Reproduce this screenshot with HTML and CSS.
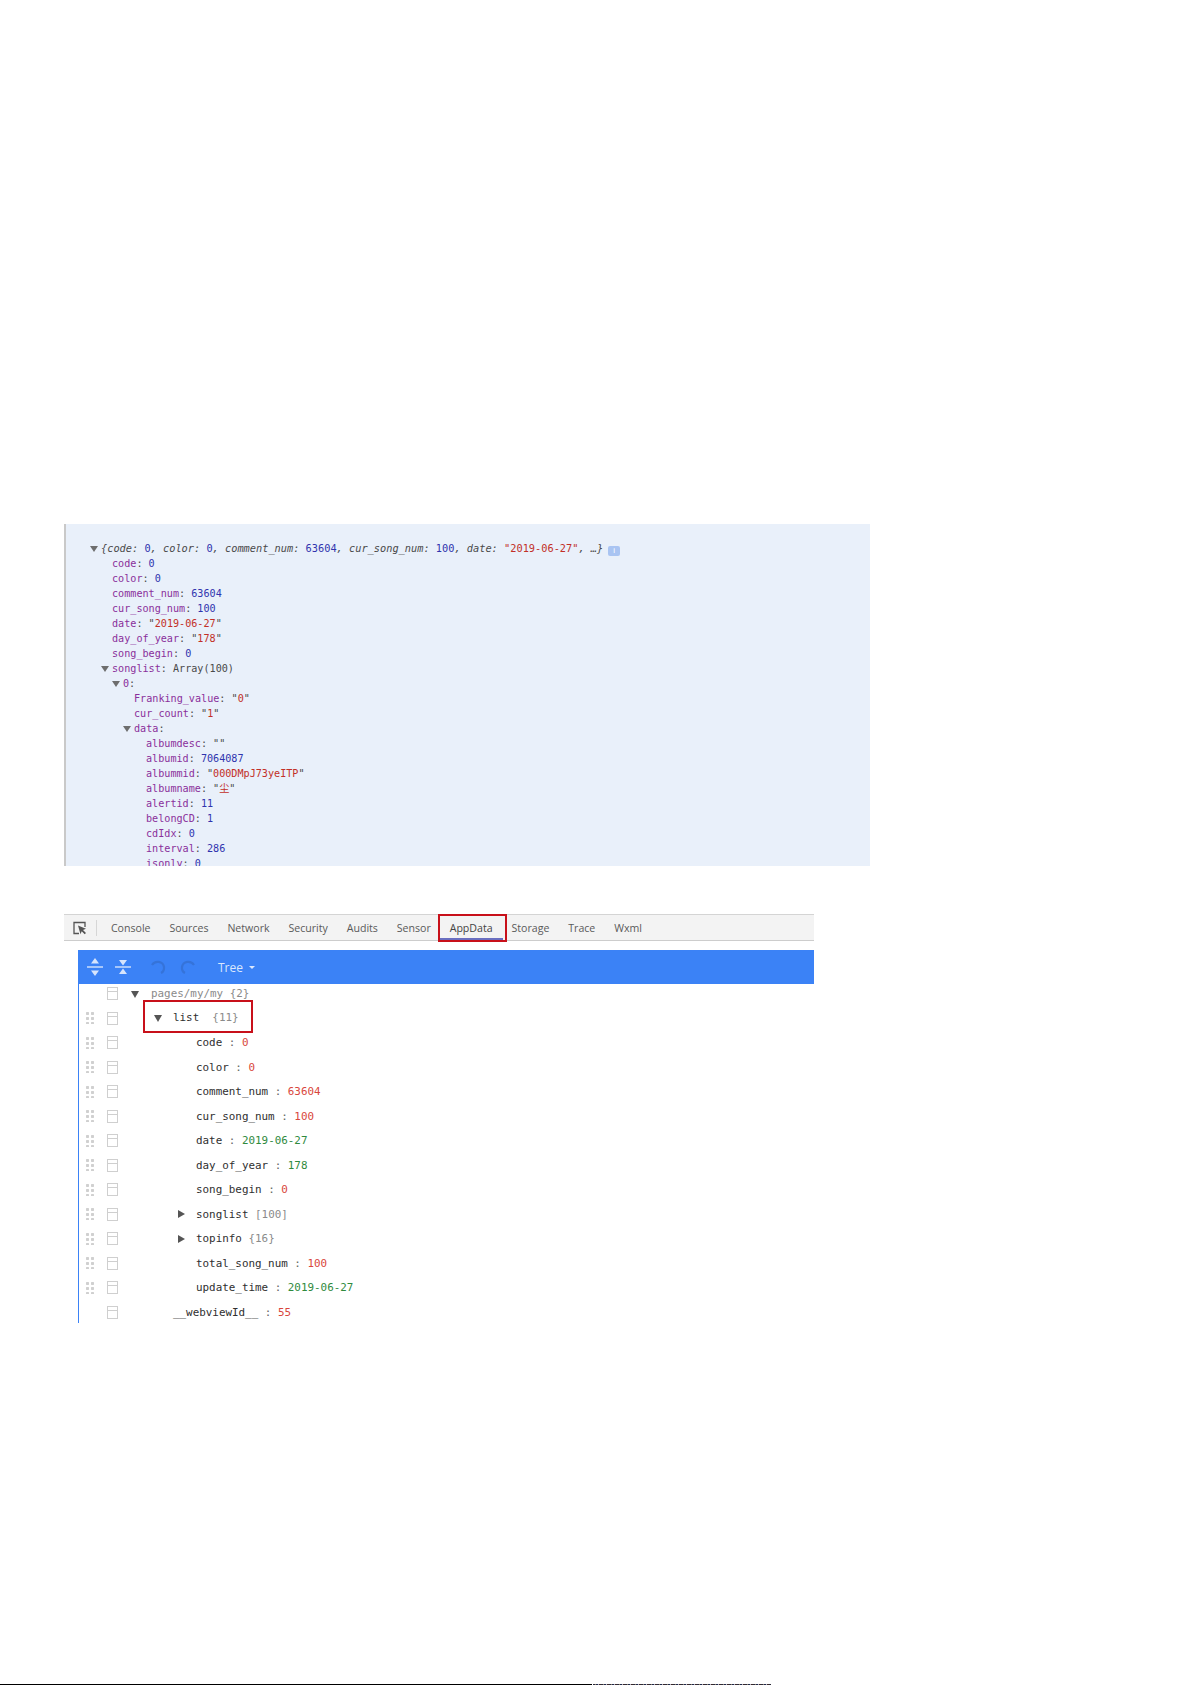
FILE: index.html
```html
<!DOCTYPE html>
<html lang="en">
<head>
<meta charset="utf-8">
<title>AppData</title>
<link rel="stylesheet" href="styles.css">
</head>
<body>
<main class="page">
  <section class="console">
    <div class="line l0 summary"><i class="tri"></i><em>{code: <b class="n">0</b>, color: <b class="n">0</b>, comment_num: <b class="n">63604</b>, cur_song_num: <b class="n">100</b>, date: <b class="s">"2019-06-27"</b>, …}</em><span class="info">i</span></div>
    <div class="line l1"><span class="k">code</span>: <b class="n">0</b></div>
    <div class="line l1"><span class="k">color</span>: <b class="n">0</b></div>
    <div class="line l1"><span class="k">comment_num</span>: <b class="n">63604</b></div>
    <div class="line l1"><span class="k">cur_song_num</span>: <b class="n">100</b></div>
    <div class="line l1"><span class="k">date</span>: "<b class="s">2019-06-27</b>"</div>
    <div class="line l1"><span class="k">day_of_year</span>: "<b class="s">178</b>"</div>
    <div class="line l1"><span class="k">song_begin</span>: <b class="n">0</b></div>
    <div class="line l1"><i class="tri"></i><span class="k">songlist</span>: Array(100)</div>
    <div class="line l2"><i class="tri"></i><span class="k">0</span>:</div>
    <div class="line l3"><span class="k">Franking_value</span>: "<b class="s">0</b>"</div>
    <div class="line l3"><span class="k">cur_count</span>: "<b class="s">1</b>"</div>
    <div class="line l3"><i class="tri"></i><span class="k">data</span>:</div>
    <div class="line l4"><span class="k">albumdesc</span>: ""</div>
    <div class="line l4"><span class="k">albumid</span>: <b class="n">7064087</b></div>
    <div class="line l4"><span class="k">albummid</span>: "<b class="s">000DMpJ73yeITP</b>"</div>
    <div class="line l4"><span class="k">albumname</span>: "<b class="s cjk">尘</b>"</div>
    <div class="line l4"><span class="k">alertid</span>: <b class="n">11</b></div>
    <div class="line l4"><span class="k">belongCD</span>: <b class="n">1</b></div>
    <div class="line l4"><span class="k">cdIdx</span>: <b class="n">0</b></div>
    <div class="line l4"><span class="k">interval</span>: <b class="n">286</b></div>
    <div class="line l4"><span class="k">isonly</span>: <b class="n">0</b></div>
  </section>

  <section class="devtools">
    <nav class="tabs">
      <svg class="inspect" width="14" height="14" viewBox="0 0 14 14"><path d="M6 12.5H1V1.500h11V6" fill="none" stroke="#555" stroke-width="1.300"/><path d="M5 4.500l8 3.300-3 1.200 3 3-1.300 1.300-3-3-1.200 3z" fill="#555"/></svg>
      <span class="sep"></span>
      <span class="tab">Console</span>
      <span class="tab">Sources</span>
      <span class="tab">Network</span>
      <span class="tab">Security</span>
      <span class="tab">Audits</span>
      <span class="tab">Sensor</span>
      <span class="tab active">AppData</span>
      <span class="tab">Storage</span>
      <span class="tab">Trace</span>
      <span class="tab">Wxml</span>
    </nav>
    <div class="editor">
      <header class="bar">
        <svg class="tool" width="16" height="20" viewBox="0 0 16 20"><path d="M8 1l4 5.500H4zM8 19l-4-5.500h8z" fill="#d6e4fc"/><path d="M0 10h16" stroke="#d6e4fc" stroke-width="1.400"/></svg>
        <svg class="tool" width="16" height="20" viewBox="0 0 16 20"><path d="M8 8.500L4 3h8zM8 11.500l4 5.500H4z" fill="#d6e4fc"/><path d="M0 10h16" stroke="#d6e4fc" stroke-width="1.400"/></svg>
        <svg class="tool undo" width="16" height="16" viewBox="0 0 16 16"><path d="M2 6c3-5 11-4 12 2 .3 3-1 5-3 6" fill="none" stroke="#3573d9" stroke-width="2.200"/></svg>
        <svg class="tool redo" width="16" height="16" viewBox="0 0 16 16"><path d="M14 6C11 1 3 2 2 8c-.3 3 1 5 3 6" fill="none" stroke="#3573d9" stroke-width="2.200"/></svg>
        <span class="mode">Tree</span><i class="caret"></i>
      </header>
      <div class="tree">
        <div class="row"><span class="grip none"></span><span class="box"></span><span class="indent d0"><i class="tri big"></i></span><span class="muted">pages/my/my {2}</span></div>
        <div class="row"><span class="grip"></span><span class="box"></span><span class="indent d1"><span class="hl"><i class="tri big"></i><span class="key">list</span>  <span class="muted">{11}</span></span></span></div>
        <div class="row"><span class="grip"></span><span class="box"></span><span class="indent d2"></span><span class="key">code</span><span class="colon"> : </span><span class="red">0</span></div>
        <div class="row"><span class="grip"></span><span class="box"></span><span class="indent d2"></span><span class="key">color</span><span class="colon"> : </span><span class="red">0</span></div>
        <div class="row"><span class="grip"></span><span class="box"></span><span class="indent d2"></span><span class="key">comment_num</span><span class="colon"> : </span><span class="red">63604</span></div>
        <div class="row"><span class="grip"></span><span class="box"></span><span class="indent d2"></span><span class="key">cur_song_num</span><span class="colon"> : </span><span class="red">100</span></div>
        <div class="row"><span class="grip"></span><span class="box"></span><span class="indent d2"></span><span class="key">date</span><span class="colon"> : </span><span class="green">2019-06-27</span></div>
        <div class="row"><span class="grip"></span><span class="box"></span><span class="indent d2"></span><span class="key">day_of_year</span><span class="colon"> : </span><span class="green">178</span></div>
        <div class="row"><span class="grip"></span><span class="box"></span><span class="indent d2"></span><span class="key">song_begin</span><span class="colon"> : </span><span class="red">0</span></div>
        <div class="row"><span class="grip"></span><span class="box"></span><span class="indent d2"><i class="tri big right"></i></span><span class="key">songlist</span>&nbsp;<span class="muted">[100]</span></div>
        <div class="row"><span class="grip"></span><span class="box"></span><span class="indent d2"><i class="tri big right"></i></span><span class="key">topinfo</span>&nbsp;<span class="muted">{16}</span></div>
        <div class="row"><span class="grip"></span><span class="box"></span><span class="indent d2"></span><span class="key">total_song_num</span><span class="colon"> : </span><span class="red">100</span></div>
        <div class="row"><span class="grip"></span><span class="box"></span><span class="indent d2"></span><span class="key">update_time</span><span class="colon"> : </span><span class="green">2019-06-27</span></div>
        <div class="row"><span class="grip none"></span><span class="box"></span><span class="indent d3"></span><span class="key">__webviewId__</span><span class="colon"> : </span><span class="red">55</span></div>
      </div>
    </div>
  </section>
  <footer class="edge"><span class="edge-solid"></span><span class="edge-noise"></span></footer>
</main>
</body>
</html>
```
FILE: styles.css
```css
* { box-sizing: border-box; }
html, body { margin: 0; background: #fff; }
.page {
  height: 1685px;
  display: flex;
  flex-direction: column;
  overflow: hidden;
  font-family: "DejaVu Sans Mono", "Noto Sans CJK SC", monospace;
}
i, em, b { font-style: normal; font-weight: normal; }

/* console panel */
.console {
  margin: 524px 0 0 64px;
  width: 806px;
  height: 342px;
  flex: none;
  overflow: hidden;
  padding-top: 17px;
  background: #e9f0fa;
  border-left: 2px solid #c9c9c9;
  color: #4a4a4a;
  font-size: 10.150px;
  line-height: 15px;
}
.line { height: 15px; white-space: pre; position: relative; }
.l0 { padding-left: 35px; }
.l1 { padding-left: 46px; }
.l2 { padding-left: 57px; }
.l3 { padding-left: 68px; }
.l4 { padding-left: 80px; }
.summary em { font-style: italic; font-size: 10.300px; }
.k { color: #8a2f9a; }
.n { color: #3034ae; }
.s { color: #c22f27; }
.cjk { font-family: "Noto Sans CJK SC", sans-serif; line-height: 12px; }
.tri {
  position: absolute;
  width: 0;
  height: 0;
  margin: 5px 0 0 -11px;
  border-left: 4px solid transparent;
  border-right: 4px solid transparent;
  border-top: 6px solid #6e6e6e;
}
.info {
  display: inline-block;
  width: 12px;
  height: 10px;
  margin-left: 5px;
  border-radius: 2px;
  background: #a9c4f2;
  color: #fff;
  font: 8px/10px "Liberation Sans", sans-serif;
  text-align: center;
  vertical-align: -1px;
}

/* devtools */
.devtools { margin: 48px 0 0 64px; width: 750px; flex: none; }
.tabs {
  height: 27px;
  display: flex;
  align-items: center;
  background: #f3f3f3;
  border-top: 1px solid #d4d4d4;
  border-bottom: 1px solid #cdcdcd;
  font: 10.600px/27px "Open Sans", "Liberation Sans", sans-serif;
  color: #5a5a5a;
}
.inspect { margin-left: 9px; flex: none; }
.sep { width: 1px; height: 16px; margin: 0 4.500px 0 9px; background: #d6d6d6; flex: none; }
.tab { padding: 0 9.450px; height: 25px; }
.tab.active {
  position: relative;
  color: #444;
  z-index: 1;
}
.tab.active::before {
  content: "";
  position: absolute;
  left: -2.500px; right: -4.500px; top: -1px; bottom: -2px;
  border: 2px solid #c8101a;
}
.tab.active::after {
  content: "";
  position: absolute;
  left: 0; right: -1px; bottom: 0;
  height: 2px;
  background: #6a6fc0;
}
.editor { margin: 9px 0 0 14px; border-left: 1px solid #3b82f6; }
.bar {
  height: 34px;
  margin-left: -1px;
  display: flex;
  align-items: center;
  background: #3b82f6;
  padding-left: 9px;
}
.tool { flex: none; margin-right: 12px; }
.undo { margin-left: 7px; margin-right: 14px; }
.redo { margin-right: 22px; }
.mode { color: #dbe8fd; font: 12px "Open Sans", "Liberation Sans", sans-serif; }
.caret {
  margin-left: 6px;
  border-left: 3px solid transparent;
  border-right: 3px solid transparent;
  border-top: 3px solid #dbe8fd;
}
.tree { margin-top: -2.500px; height: 341.500px; font-size: 10.900px; color: #333; }
.row {
  height: 24.500px;
  display: flex;
  align-items: center;
  white-space: pre;
}
.grip {
  width: 9px;
  height: 12px;
  margin-left: 7px;
  flex: none;
  background: radial-gradient(circle at 1.500px 1.500px, #d0d0d0 1.400px, transparent 1.500px) 0 0 / 5px 5px;
}
.grip.none { background: none; }
.box {
  width: 11px;
  height: 13px;
  margin-left: 12px;
  flex: none;
  border: 1px solid #cfcfcf;
  background: linear-gradient(#cfcfcf, #cfcfcf) 0 3px / 100% 1px no-repeat;
}
.indent { display: block; flex: none; position: relative; height: 24.500px; }
.d0 { width: 33px; }
.d1 { width: 44px; }
.d2 { width: 78px; }
.d3 { width: 55px; }
.tree .tri.big {
  position: absolute;
  margin: 0;
  top: 9px;
  right: 12px;
  border-left-width: 4px;
  border-right-width: 4px;
  border-top: 7px solid #555;
}
.tree .tri.big.right {
  top: 8px;
  right: 11px;
  border-top: 4px solid transparent;
  border-bottom: 4px solid transparent;
  border-left: 7px solid #555;
  border-right: 0;
}
.hl {
  position: absolute;
  left: 25px;
  top: -6px;
  width: 110px;
  height: 33px;
  padding: 9px 0 0 28px;
  border: 2px solid #c8101a;
  line-height: 14px;
}
.hl .tri.big { left: 9px; right: auto; top: 13px; }
.key { color: #2f2f2f; }
.muted { color: #8a8a8a; }
.colon { color: #666; }
.red { color: #d9463c; }
.green { color: #2f8a3e; }

/* bottom edge */
.edge {
  margin-top: auto;
  height: 1px;
  flex: none;
  display: flex;
}
.edge-solid { width: 592px; background: #000; }
.edge-noise {
  width: 178px;
  margin-left: 1px;
  background: repeating-linear-gradient(90deg, #2b2b3a 0 2px, #8a7a6a 2px 3px, #1e2a4a 3px 5px, #b0a8b8 5px 6px, #3a2a2a 6px 8px);
}
```
